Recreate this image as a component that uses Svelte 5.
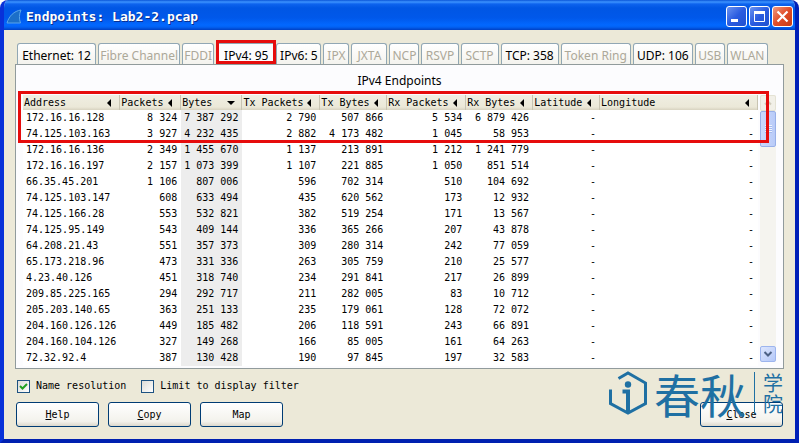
<script>
  const tabs = [
    { label: 'Ethernet: 12', size: 81 },
    { label: 'Fibre Channel', size: 84, off: true },
    { label: 'FDDI', size: 34, off: true },
    { label: 'IPv4: 95', size: 60, active: true },
    { label: 'IPv6: 5', size: 47 },
    { label: 'IPX', size: 28, off: true },
    { label: 'JXTA', size: 38, off: true },
    { label: 'NCP', size: 32, off: true },
    { label: 'RSVP', size: 39, off: true },
    { label: 'SCTP', size: 40, off: true },
    { label: 'TCP: 358', size: 60 },
    { label: 'Token Ring', size: 72, off: true },
    { label: 'UDP: 106', size: 62 },
    { label: 'USB', size: 32, off: true },
    { label: 'WLAN', size: 43, off: true }
  ];
  const tabTotal = tabs.reduce((sum, t) => sum + t.size, 0);

  const columns = [
    { name: 'Address', size: 96 },
    { name: 'Packets', size: 61 },
    { name: 'Bytes', size: 60, sorted: true },
    { name: 'Tx Packets', size: 78 },
    { name: 'Tx Bytes', size: 67 },
    { name: 'Rx Packets', size: 79 },
    { name: 'Rx Bytes', size: 67 },
    { name: 'Latitude', size: 67 },
    { name: 'Longitude', size: 160 }
  ];
  const columnTotal = columns.reduce((sum, c) => sum + c.size, 0);

  const data = [
    ['172.16.16.128', 8324, 7387292, 2790, 507866, 5534, 6879426],
    ['74.125.103.163', 3927, 4232435, 2882, 4173482, 1045, 58953],
    ['172.16.16.136', 2349, 1455670, 1137, 213891, 1212, 1241779],
    ['172.16.16.197', 2157, 1073399, 1107, 221885, 1050, 851514],
    ['66.35.45.201', 1106, 807006, 596, 702314, 510, 104692],
    ['74.125.103.147', 608, 633494, 435, 620562, 173, 12932],
    ['74.125.166.28', 553, 532821, 382, 519254, 171, 13567],
    ['74.125.95.149', 543, 409144, 336, 365266, 207, 43878],
    ['64.208.21.43', 551, 357373, 309, 280314, 242, 77059],
    ['65.173.218.96', 473, 331336, 263, 305759, 210, 25577],
    ['4.23.40.126', 451, 318740, 234, 291841, 217, 26899],
    ['209.85.225.165', 294, 292717, 211, 282005, 83, 10712],
    ['205.203.140.65', 363, 251133, 235, 179061, 128, 72072],
    ['204.160.126.126', 449, 185482, 206, 118591, 243, 66891],
    ['204.160.104.126', 327, 149268, 166, 85005, 161, 64263],
    ['72.32.92.4', 387, 130428, 190, 97845, 197, 32583]
  ];
  const group = (n) => String(n).replace(/\B(?=(\d{3})+$)/g, ' ');
  const rows = data.map(([address, ...nums]) => [address, ...nums.map(group), '-', '-']);

  let resolve = $state(true);
  let limit = $state(false);
</script>

<div class="window">
  <header>
    <svg class="fin" viewBox="0 0 18 16" aria-hidden="true">
      <path d="M1 14C3 7 8 2 15 1C13 5 13 10 14.500 14Z" fill="#1c6fc8" stroke="#5aa6ea" />
    </svg>
    <h1>Endpoints: Lab2-2.pcap</h1>
    <button class="sys" aria-label="Minimize"><svg viewBox="0 0 21 21"><path d="M5 14.500H12" stroke="#fff" stroke-width="3" /></svg></button>
    <button class="sys" aria-label="Maximize"><svg viewBox="0 0 21 21"><path d="M5 6.500H16" stroke="#fff" stroke-width="3" /><path d="M5.500 6V15.500H15.500V6" fill="none" stroke="#fff" /></svg></button>
    <button class="sys quit" aria-label="Close window"><svg viewBox="0 0 21 21"><path d="M5.500 5.500L15.500 15.500M15.500 5.500L5.500 15.500" stroke="#fff" stroke-width="2.200" /></svg></button>
  </header>

  <main>
    <nav>
      {#each tabs as tab}
        <button class="tab" class:active={tab.active} disabled={tab.off} style="width: {(tab.size / tabTotal) * 100}%"><span>{tab.label}</span></button>
      {/each}
    </nav>

    <section class="panel">
      <h2>IPv4 Endpoints</h2>
      <div class="list">
        <table>
          <colgroup>
            {#each columns as col}
              <col style="width: {(col.size / columnTotal) * 100}%" />
            {/each}
          </colgroup>
          <thead>
            <tr>
              {#each columns as col}
                <th scope="col">
                  <div>
                    <span>{col.name}</span>
                    <svg viewBox="0 0 8 8" aria-hidden="true"><path d={col.sorted ? 'M0 2H8L4 6Z' : 'M2 4L6 0V8Z'} /></svg>
                  </div>
                </th>
              {/each}
            </tr>
          </thead>
          <tbody>
            {#each rows as row}
              <tr>
                {#each row as cell, i}
                  <td class:sorted={columns[i].sorted}>{cell}</td>
                {/each}
              </tr>
            {/each}
          </tbody>
        </table>
        <div class="scroll">
          <button class="step" disabled aria-label="Scroll up"><svg viewBox="0 0 14 14"><path d="M4 8.500L7 5.500L10 8.500" /></svg></button>
          <div class="thumb"><i></i></div>
          <button class="step down" aria-label="Scroll down"><svg viewBox="0 0 14 14"><path d="M3.500 5L7 8.500L10.500 5" /></svg></button>
        </div>
        <div class="mark"></div>
      </div>
    </section>

    <div class="options">
      <label><input type="checkbox" bind:checked={resolve} />Name resolution</label>
      <label><input type="checkbox" bind:checked={limit} />Limit to display filter</label>
    </div>

    <footer>
      <button class="push"><u>H</u>elp</button>
      <button class="push"><u>C</u>opy</button>
      <button class="push">Map</button>
      <button class="push close"><u>C</u>lose</button>
      <div class="brand">
        <svg viewBox="0 0 40 44" aria-hidden="true">
          <path d="M10.500 7.500L20 2L37.500 12V32.500L20 42L2.500 32.500V18.500" fill="none" stroke="#1f70a3" stroke-width="3" />
          <circle cx="20" cy="13.500" r="3.200" fill="#1f70a3" />
          <path d="M14.500 20.500H20V41" fill="none" stroke="#1f70a3" stroke-width="4" />
        </svg>
        <span class="big">春秋</span>
        <span class="small">学院</span>
      </div>
    </footer>
  </main>
</div>

<style>
  :global(body) {
    margin: 0;
    background: #fff;
  }
  .window {
    box-sizing: border-box;
    min-height: 100vh;
    display: flex;
    flex-direction: column;
    border: 4px solid #0831d9;
    border-right-color: #0020b8;
    border-bottom-color: #0020b0;
    border-top: 0;
    border-radius: 8px 8px 0 0;
    background: #ece9d8;
    color: #000;
    font: 10px/16px 'DejaVu Sans Mono', monospace;
    overflow: hidden;
  }
  button {
    font: inherit;
    color: inherit;
    padding: 0;
    margin: 0;
  }
  svg {
    display: block;
  }
  header {
    display: flex;
    align-items: center;
    gap: 2px;
    height: 30px;
    margin: 0 -4px;
    padding: 0 6px;
    box-sizing: border-box;
    background: linear-gradient(#0a55d8 0, #3c93ff 2px, #0d63ee 4px, #0056e4 8px, #0058ea 18px, #0268ff 25px, #0262f4 27px, #0040c4 30px);
  }
  .fin {
    width: 18px;
    height: 16px;
    margin-top: 3px;
  }
  h1 {
    flex: 1;
    margin: 4px 0 0;
    font: bold 13px/18px 'DejaVu Sans Mono', monospace;
    color: #fff;
    text-shadow: 1px 1px #0a2f90;
  }
  .sys {
    width: 21px;
    height: 21px;
    margin-top: 3px;
    box-sizing: border-box;
    border: 1px solid #fff;
    border-radius: 3px;
    background: linear-gradient(135deg, #6b93f0, #2a5be0 50%, #2050d0);
  }
  .sys svg {
    margin: -1px;
    width: 21px;
    height: 21px;
  }
  .quit {
    background: linear-gradient(135deg, #f09a80, #e04c28 50%, #c83c14);
  }
  main {
    flex: 1;
    padding: 13px 11px 12px;
  }
  nav {
    display: flex;
    padding: 0 14px 0 2px;
    font: 12px/23px 'Noto Sans', sans-serif;
  }
  .tab {
    position: relative;
    height: 21px;
    padding: 0;
    border: 0;
    background: none;
    white-space: nowrap;
  }
  .tab span {
    display: flex;
    justify-content: center;
    height: 20px;
    margin-right: 2px;
    border: 1px solid #91a7b4;
    border-bottom: 0;
    border-radius: 3px 3px 0 0;
    background: linear-gradient(#fff, #f4f3ee);
  }
  .tab:disabled {
    color: #aca899;
  }
  .active span {
    background: #fcfcfe;
    margin-right: 0;
  }
  .active::after {
    content: '';
    position: absolute;
    inset: -3px 0 0;
    border: 3px solid #e60c0c;
  }
  .panel {
    border: 1px solid #919b9c;
    background: #fcfcfe;
    padding: 6px 7px 2px;
  }
  h2 {
    margin: 0 0 4px;
    font: 12px/20px 'Noto Sans', sans-serif;
    text-align: center;
  }
  .list {
    position: relative;
    display: flex;
    gap: 2px;
  }
  table {
    flex: 1;
    table-layout: fixed;
    border-collapse: collapse;
    background: #fff;
  }
  th {
    padding: 0;
    height: 15px;
    background: linear-gradient(#f0eee2, #ebe8d8 12px, #d8d3c0);
    font-weight: normal;
  }
  th div {
    display: flex;
    justify-content: space-between;
    align-items: center;
    height: 15px;
    padding: 0 6px 0 1px;
    border-right: 1px solid #c8c4b2;
    white-space: nowrap;
  }
  th svg {
    width: 8px;
    height: 8px;
  }
  td {
    height: 16px;
    padding: 0 4px 0 3px;
    text-align: right;
    line-height: 16px;
    white-space: nowrap;
  }
  td:first-child {
    text-align: left;
  }
  .sorted {
    background: #ededed;
  }
  .scroll {
    display: flex;
    flex-direction: column;
    width: 16px;
    margin-bottom: 4px;
    background: #f5f4ef;
  }
  .step {
    height: 16px;
    border: 1px solid #e4e2d4;
    border-radius: 2px;
    background: #f2f0e8;
  }
  .step svg {
    width: 14px;
    height: 14px;
    fill: none;
    stroke: #d0ccbc;
    stroke-width: 2;
  }
  .down {
    margin-top: auto;
    border-color: #9db5ee;
    background: linear-gradient(135deg, #dde6fe, #b4c8f8);
  }
  .down svg {
    stroke: #4d6185;
  }
  .thumb {
    display: grid;
    place-items: center;
    height: 36px;
    box-sizing: border-box;
    border: 1px solid #98b0e8;
    border-radius: 2px;
    background: linear-gradient(90deg, #cbd9fd, #b9cbf8);
  }
  .thumb i {
    width: 7px;
    height: 8px;
    background: repeating-linear-gradient(#eef4fe 0 1px, #a3b8ee 1px 2px);
  }
  .mark {
    position: absolute;
    left: -5px;
    right: 7px;
    top: -4px;
    height: 52px;
    box-sizing: border-box;
    border: 3px solid #e60c0c;
  }
  .options {
    display: flex;
    gap: 15px;
    padding: 9px 2px;
  }
  label {
    display: flex;
    align-items: center;
    gap: 6px;
  }
  input {
    appearance: none;
    width: 13px;
    height: 13px;
    margin: 0;
    box-sizing: border-box;
    border: 1px solid #1d5281;
    background: linear-gradient(135deg, #dcdcd7, #fff);
  }
  input:checked {
    background: url("data:image/svg+xml,%3Csvg xmlns='http://www.w3.org/2000/svg' viewBox='0 0 11 11'%3E%3Cpath d='M2 5L4.500 7.500L9 3' fill='none' stroke='%2321a121' stroke-width='2'/%3E%3C/svg%3E"), linear-gradient(135deg, #dcdcd7, #fff);
  }
  footer {
    position: relative;
    display: flex;
    gap: 9px;
    padding: 0 1px;
    margin-top: -1px;
  }
  .push {
    width: 83px;
    height: 25px;
    border: 1px solid #003c74;
    border-radius: 3px;
    background: linear-gradient(#fff, #f3f2ec 80%, #dcd8cc);
  }
  .close {
    margin-left: auto;
  }
  .brand {
    position: absolute;
    right: 1px;
    bottom: 12px;
    display: flex;
    align-items: center;
    height: 44px;
    color: #1f70a3;
    font-family: 'Noto Sans CJK SC', sans-serif;
    pointer-events: none;
  }
  .brand svg {
    width: 40px;
    height: 44px;
    margin-right: 6px;
  }
  .big {
    font-size: 46px;
    line-height: 40px;
  }
  .small {
    width: 20px;
    margin-left: 8px;
    padding-left: 8px;
    border-left: 1px solid #1f70a3;
    font-size: 20px;
    line-height: 21px;
  }
</style>
